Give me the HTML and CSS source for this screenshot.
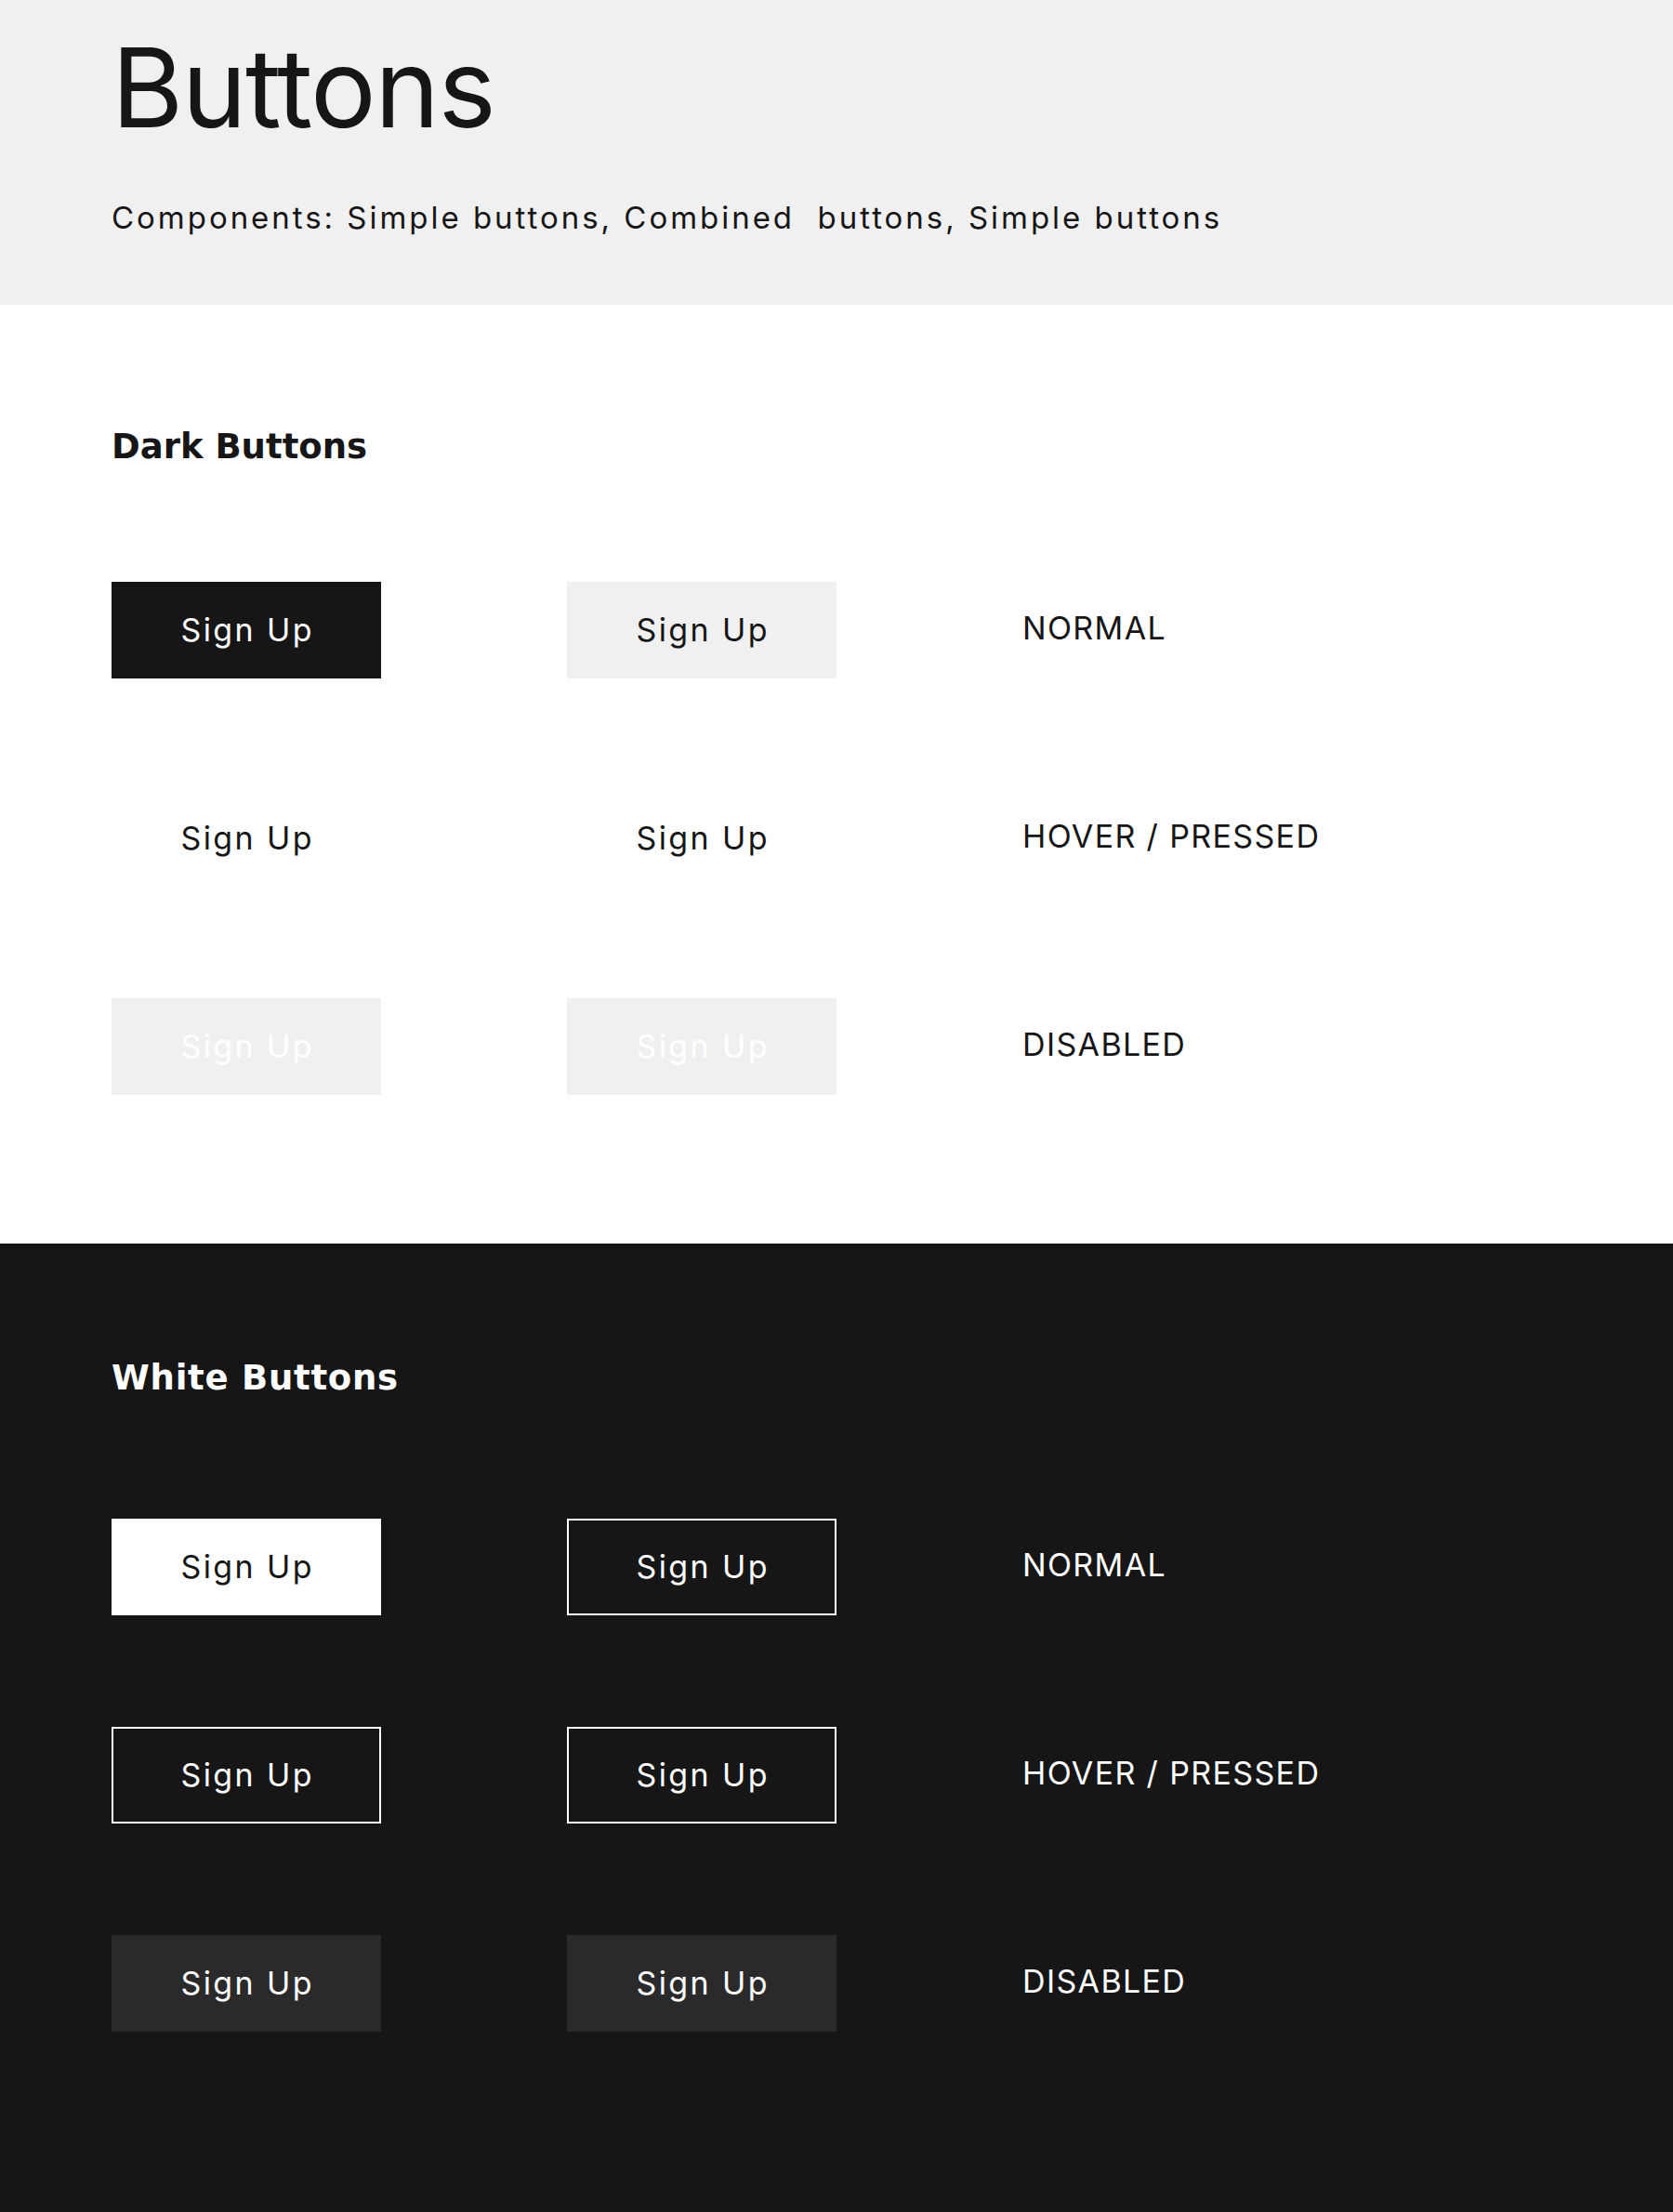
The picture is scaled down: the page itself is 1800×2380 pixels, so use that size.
FILE: index.html
```html
<!DOCTYPE html>
<html lang="en">
<head>
<meta charset="utf-8">
<title>Buttons</title>
<link rel="stylesheet" href="styles.css">
</head>
<body>
<header class="intro">
  <h1 class="intro-title">Buttons</h1>
  <p class="intro-sub">Components: Simple buttons, Combined&nbsp; buttons, Simple buttons</p>
</header>

<section class="panel panel--light">
  <h2 class="panel-title">Dark Buttons</h2>
  <div class="states">
    <div class="btn btn--dark">Sign Up</div>
    <div class="btn btn--soft">Sign Up</div>
    <div class="state-label">NORMAL</div>

    <div class="btn btn--ghost-dark">Sign Up</div>
    <div class="btn btn--ghost-dark">Sign Up</div>
    <div class="state-label">HOVER / PRESSED</div>

    <div class="btn btn--disabled-light">Sign Up</div>
    <div class="btn btn--disabled-light">Sign Up</div>
    <div class="state-label">DISABLED</div>
  </div>
</section>

<section class="panel panel--dark">
  <h2 class="panel-title panel-title--wide">White Buttons</h2>
  <div class="states">
    <div class="btn btn--white">Sign Up</div>
    <div class="btn btn--outline">Sign Up</div>
    <div class="state-label">NORMAL</div>

    <div class="btn btn--outline">Sign Up</div>
    <div class="btn btn--outline">Sign Up</div>
    <div class="state-label">HOVER / PRESSED</div>

    <div class="btn btn--disabled-dark">Sign Up</div>
    <div class="btn btn--disabled-dark">Sign Up</div>
    <div class="state-label">DISABLED</div>
  </div>
</section>
</body>
</html>
```
FILE: styles.css
```css
* { box-sizing: border-box; }

html, body {
  margin: 0;
  padding: 0;
}

body {
  font-family: Inter, "Noto Sans", sans-serif;
  color: #161616;
  background: #ffffff;
}

.intro {
  background: #f0f0f0;
  height: 328px;
  padding: 35px 120px 0;
}

.intro-title {
  margin: 0;
  font-size: 118px;
  line-height: 1;
  font-weight: 400;
  letter-spacing: -0.013em;
}

.intro-sub {
  margin: 65px 0 0;
  font-size: 33px;
  line-height: 1;
  font-weight: 400;
  letter-spacing: 0.09em;
}

.panel {
  padding: 0 120px;
}

.panel--light {
  padding-top: 134px;
  padding-bottom: 160px;
  background: #ffffff;
  color: #161616;
}

.panel--dark {
  padding-top: 126px;
  padding-bottom: 194px;
  background: #161616;
  color: #ffffff;
}

.panel-title {
  margin: 0;
  font-family: "DejaVu Sans", Inter, sans-serif;
  font-size: 37px;
  line-height: 1;
  font-weight: 700;
}

.panel-title--wide {
  letter-spacing: 0.02em;
}

.panel--light .panel-title { margin-bottom: 127px; }
.panel--dark .panel-title { margin-bottom: 133px; }

.states {
  display: grid;
  grid-template-columns: 290px 290px auto;
  grid-auto-rows: 104px;
  column-gap: 200px;
  row-gap: 120px;
  align-items: center;
}

.btn {
  height: 104px;
  display: flex;
  align-items: center;
  justify-content: center;
  font-size: 34px;
  line-height: 1;
  letter-spacing: 0.07em;
  padding-left: 0.07em;
}

.btn--dark { background: #161616; color: #ffffff; }
.btn--soft { background: #f0f0f0; color: #161616; }
.btn--ghost-dark { background: transparent; color: #161616; }
.btn--disabled-light { background: #f0f0f0; color: #ffffff; }

.btn--white { background: #ffffff; color: #161616; }
.btn--outline { background: transparent; color: #ffffff; border: 2px solid #ffffff; }
.btn--disabled-dark { background: #2a2a2a; color: #ffffff; }

.state-label {
  font-size: 34px;
  line-height: 1;
  letter-spacing: 0.04em;
  padding-bottom: 5px;
}
```
